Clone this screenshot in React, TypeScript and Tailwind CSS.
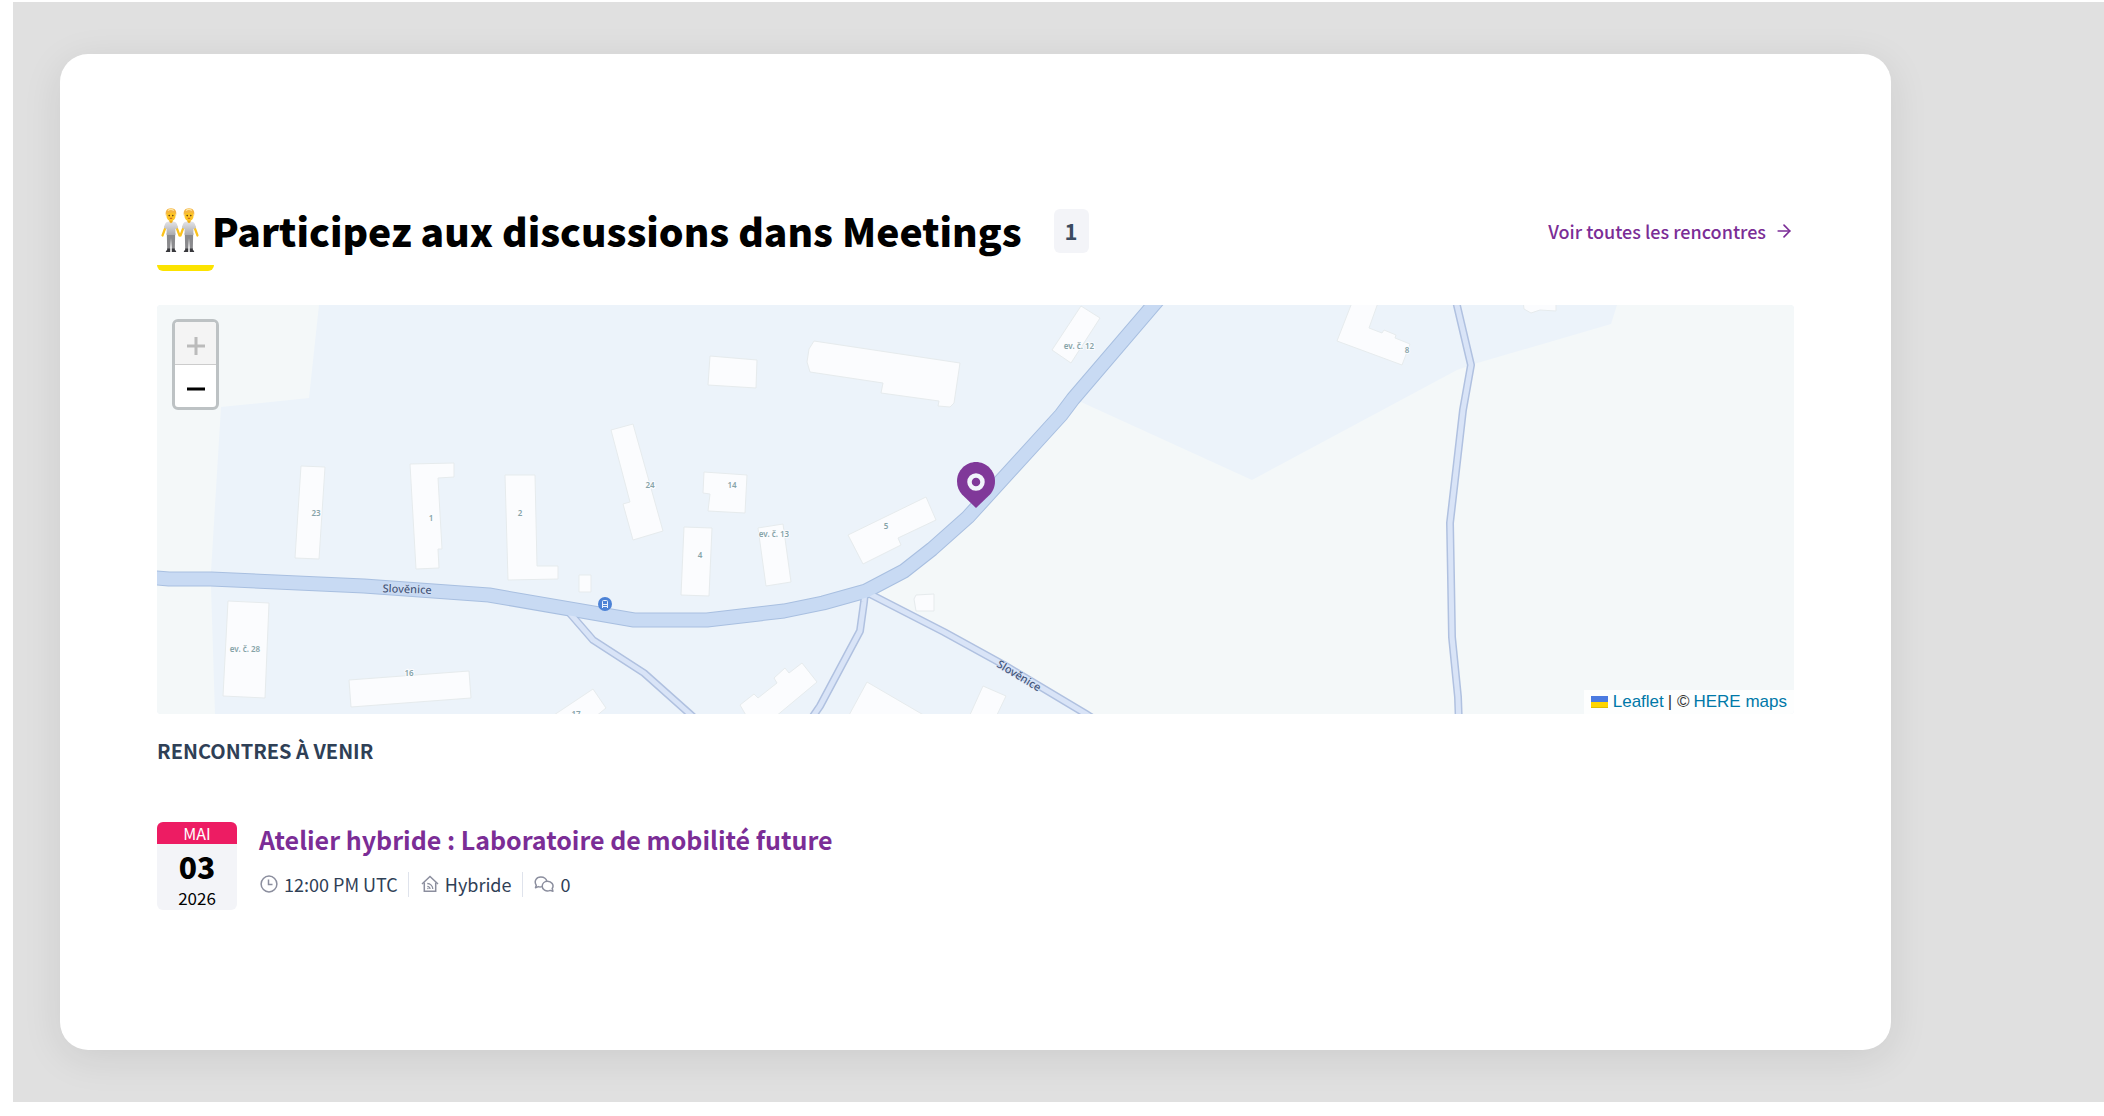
import * as React from 'react';
import { ArrowRight } from 'lucide-react';

interface MapLabel {
  text: string;
  x: number;
  y: number;
}

interface Meeting {
  id: number;
  month: string;
  day: string;
  year: string;
  title: string;
  time: string;
  type: string;
  comments: number;
}

const meetings: Meeting[] = [
  {
    id: 1,
    month: 'MAI',
    day: '03',
    year: '2026',
    title: 'Atelier hybride : Laboratoire de mobilité future',
    time: '12:00 PM UTC',
    type: 'Hybride',
    comments: 0,
  },
];

const fields = [
  '0,0 162,0 152,93 64,102 54,267 54,282 58,409 0,409',
  '924,97 1095,175 1300,65 1317,59 1454,19 1460,0 1637,0 1637,409 929,409 847,360 787,327 709,286 747,266 775,244 811,212 904,110',
];

const buildings = [
  '144,161 168,162 162,254 138,253',
  '253,159 297,158 297,172 281,173 285,244 281,244 282,263 259,264',
  '348,170 378,170 380,261 401,261 401,274 351,275',
  '454,125 476,119 506,226 476,235 466,199 473,197',
  '527,222 555,223 552,291 524,290',
  '422,270 434,270 434,287 422,287',
  '71,296 112,298 108,393 66,391',
  '192,375 312,366 314,393 194,402',
  '436,384 449,403 438,412 394,412',
  '553,51 600,55 599,83 551,80',
  '657,36 803,58 797,98 793,102 781,101 782,96 724,88 726,78 653,67 650,57 652,44',
  '924,1 943,13 914,58 895,45',
  '547,167 590,170 588,208 551,206 553,189 546,188',
  '601,223 626,219 634,277 609,281',
  '691,230 769,192 779,215 741,233 744,240 706,259',
  '759,290 777,289 777,306 759,306 757,294',
  '645,358 660,377 618,412 590,412 583,400 597,389 601,393 620,378 617,373 628,363 632,368',
  '710,377 770,412 691,412',
  '826,381 849,391 839,412 812,412',
  '1196,-5 1222,-5 1212,23 1225,28 1227,25 1239,30 1238,33 1253,39 1245,60 1180,36',
  '1366,-5 1367,4 1374,8 1383,5 1399,6 1399,-5',
];

const sideRoads = [
  '410,305 436,335 487,368 533,409 545,420',
  '708,286 707,297 703,326 663,401 650,420',
  '709,287 787,327 847,360 929,409 945,419',
  '1298,-8 1314,60 1306,105 1293,218 1294,272 1295,332 1301,392 1302,420',
];

const mainRoad =
  '-10,272 12,274 54,274 207,281 332,290 477,315 550,315 627,306 666,298 709,286 747,266 775,244 811,212 904,110 916,94 1005,-10';

const labels: MapLabel[] = [
  { text: '23', x: 159, y: 208 },
  { text: '1', x: 274, y: 213 },
  { text: '2', x: 363, y: 208 },
  { text: '24', x: 493, y: 180 },
  { text: '4', x: 543, y: 250 },
  { text: 'ev. č. 28', x: 88, y: 344 },
  { text: '16', x: 252, y: 368 },
  { text: '17', x: 419, y: 409 },
  { text: '14', x: 575, y: 180 },
  { text: 'ev. č. 13', x: 617, y: 229 },
  { text: '5', x: 729, y: 221 },
  { text: 'ev. č. 12', x: 922, y: 41 },
  { text: '8', x: 1250, y: 45 },
];

const Person: React.FC<{ x: number }> = ({ x }) => (
  <g transform={`translate(${x} 0)`}>
    <path d="M5 18 L1.5 27.5 M15 18 L18.5 27.5" stroke="#fcc21b" strokeWidth="2.2" strokeLinecap="round" />
    <path d="M5.800 25 H14.200 L13.800 42 H10.900 L10 30 L9.100 42 H6.200 Z" fill="#8a8a8d" />
    <path d="M8 13.500 C4.500 14 4 15.500 2.900 20 L5.600 21 V27 H14.400 V21 L17.100 20 C16 15.500 15.500 14 12 13.500 Z" fill="url(#shirt)" />
    <path d="M8.400 11 H11.600 V14 L10 15.200 L8.400 14 Z" fill="#f0ac14" />
    <ellipse cx="10" cy="7.500" rx="4.600" ry="5.500" fill="#fdc424" />
    <path d="M5 8 C3.800 3 6 .3 10 .3 C14 .3 16.200 3 15 8 C14.700 5.500 13.500 4.600 12 4.500 C10 5 7.500 4.700 6.600 4.900 C5.800 5.500 5.300 6.500 5 8 Z" fill="#f4b544" />
    <path d="M7 2.600 C8.500 1.200 11 1.300 12.800 2.400" stroke="#ffe6a3" strokeWidth="1.200" fill="none" />
    <circle cx="8.200" cy="7.600" r=".8" fill="#5a3d12" />
    <circle cx="11.800" cy="7.600" r=".8" fill="#5a3d12" />
    <path d="M8.800 10.300 H11.200" stroke="#c4561c" strokeWidth="1" />
    <path d="M6.200 40.500 H9.200 V44 H4.800 C4.800 43 5.500 42.400 6.200 42 Z M10.800 40.500 H13.800 V42 C14.500 42.400 15.200 43 15.200 44 H10.800 Z" fill="#38383c" />
  </g>
);

const PeopleEmoji: React.FC = () => (
  <svg viewBox="0 0 40 45" className="h-[45px] w-10 shrink-0" role="img" aria-label="Deux personnes" fill="none">
    <defs>
      <linearGradient id="shirt" x1="0" y1="0" x2="0" y2="1">
        <stop offset="0" stopColor="#e4e4e8" />
        <stop offset="1" stopColor="#a9a9ad" />
      </linearGradient>
    </defs>
    <Person x={1} />
    <Person x={19} />
  </svg>
);

const ClockIcon: React.FC = () => (
  <svg viewBox="0 0 18 18" className="size-[18px]" fill="none" stroke="#8b8e9e" strokeWidth="1.5">
    <circle cx="9" cy="9" r="7.9" />
    <path d="M8.500 4.500 V9.500 H12.500" />
  </svg>
);

const HybridIcon: React.FC = () => (
  <svg viewBox="0 0 18 18" className="size-[18px]" fill="none" stroke="#8b8e9e" strokeWidth="1.5">
    <path d="M1 9 L9 1.500 L17 9" />
    <path d="M3.300 7.500 V16.300 H14.700 V7.500" />
    <path d="M6.300 8.500 A5.500 5.500 0 0 1 11.800 14 M6.300 11.300 A2.700 2.700 0 0 1 9 14" strokeWidth="1.300" />
    <circle cx="6.900" cy="13.500" r=".7" fill="#8b8e9e" stroke="none" />
  </svg>
);

const CommentsIcon: React.FC = () => (
  <svg viewBox="0 0 20 18" className="h-[18px] w-5" fill="none" stroke="#8b8e9e" strokeWidth="1.500" strokeLinejoin="round">
    <path d="M8 11.600 C6.500 12.100 5.300 12 4.300 11.600 L1.500 12.800 L2.300 10.300 C-.2 6.500 2 2 6.800 2 C10.200 2 12.500 4 12.700 6.300" />
    <path d="M13.300 6.300 C17.500 6.200 20.500 10 18.200 13.500 L18.900 16.200 L16.200 15.400 C12 17.200 8 14.500 8.200 11 C8.400 8.500 10.500 6.400 13.300 6.300 Z" />
  </svg>
);

const MapCanvas: React.FC = () => (
  <svg viewBox="0 0 1637 409" preserveAspectRatio="xMidYMid slice" className="block h-full w-full" aria-label="Carte">
    <rect width="1637" height="409" fill="#ecf3fa" />
    {fields.map(points => (
      <polygon key={points} points={points} fill="#f4f8f9" />
    ))}
    {buildings.map(points => (
      <polygon key={points} points={points} fill="#fbfcfe" stroke="#e6ebed" strokeWidth="1" />
    ))}
    <g fill="none" strokeLinejoin="round">
      {sideRoads.map(points => (
        <polyline key={points} points={points} stroke="#b0c1e0" strokeWidth="8" />
      ))}
      <polyline points={mainRoad} stroke="#a8bfe0" strokeWidth="15" />
      {sideRoads.map(points => (
        <polyline key={points} points={points} stroke="#d9e4f7" strokeWidth="5" />
      ))}
      <polyline points={mainRoad} stroke="#c8daf3" strokeWidth="13" />
    </g>
    <g fill="#86a3a8" stroke="#fbfcfe" strokeWidth="2" paintOrder="stroke" textAnchor="middle" className="text-[8px] font-semibold">
      {labels.map(({ text, x, y }) => (
        <text key={text} x={x} y={y + 3}>{text}</text>
      ))}
    </g>
    <g fill="#44567a" stroke="#d9e4f7" strokeWidth="1" paintOrder="stroke" textAnchor="middle" className="text-[11px] font-medium">
      <text transform="translate(250 288) rotate(2)">Slověnice</text>
      <text transform="translate(860 374) rotate(31)">Slověnice</text>
    </g>
    <circle cx="448" cy="299" r="7" fill="#4c82d6" />
    <path d="M445.500 303 V296.500 Q445.500 295.500 446.500 295.500 H449.500 Q450.500 295.500 450.500 296.500 V303 M445.500 299.500 H450.500 M445.500 301.500 H450.500" fill="none" stroke="#e8f0fc" strokeWidth="1" />
    <path d="M819 157 C829 157 838 165.500 838 176 C838 182 836 186 833 189.500 L819 203 L805 189.500 C802 186 800 182 800 176 C800 165.500 809 157 819 157 Z" fill="#803899" />
    <circle cx="819" cy="177" r="6.500" fill="none" stroke="#f1f4fb" strokeWidth="4.500" />
  </svg>
);

const MeetingsMap: React.FC = () => (
  <div className="relative mt-[52px] h-[409px] overflow-hidden rounded-[4px] font-['Noto_Sans',sans-serif]">
    <MapCanvas />
    <div className="absolute top-[14px] left-[15px] flex w-[47px] flex-col overflow-hidden rounded-[6px] border-[3px] border-[#bdc2c4] bg-white">
      <button type="button" disabled aria-label="Zoom avant" className="flex h-[43px] items-center justify-center border-b border-[#ccc] bg-[#f4f4f4] pt-[6px] text-[#bbb]">
        <svg viewBox="0 0 18 18" className="size-[18px]" stroke="currentColor" strokeWidth="3">
          <path d="M0 9 H18 M9 0 V18" />
        </svg>
      </button>
      <button type="button" aria-label="Zoom arrière" className="flex h-[42px] items-center justify-center pt-[6px] text-black">
        <svg viewBox="0 0 18 18" className="size-[18px]" stroke="currentColor" strokeWidth="3">
          <path d="M0 9 H18" />
        </svg>
      </button>
    </div>
    <div className="absolute right-0 bottom-0 flex h-6 items-center bg-white/80 px-[7px] font-['Liberation_Sans',Arial,sans-serif] text-[17px] text-[#333]">
      <svg viewBox="0 0 17 12" className="mr-[5px] h-3 w-[17px]">
        <path fill="#4c7be1" d="M0 0h17v6H0z" />
        <path fill="#ffd500" d="M0 6h17v5H0z" />
        <path fill="#e0bc00" d="M0 11h17v1H0z" />
      </svg>
      <a href="#leaflet" className="text-[#0078a8]">Leaflet</a>
      <span className="mx-1">| ©</span>
      <a href="#here" className="text-[#0078a8]">HERE maps</a>
    </div>
  </div>
);

const MeetingRow: React.FC<{ meeting: Meeting }> = ({ meeting }) => (
  <li className="flex gap-[22px]">
    <div className="flex w-20 shrink-0 flex-col overflow-hidden rounded-[6px] bg-[#f3f4f8] text-center text-black">
      <span className="h-[22px] bg-[#ed1c63] text-[16px] leading-[22px] text-white">{meeting.month}</span>
      <span className="h-11 text-[30px] leading-[44px] font-black">{meeting.day}</span>
      <span className="h-[22px] text-[17px] leading-[20px]">{meeting.year}</span>
    </div>
    <div>
      <h4 className="text-[25px] leading-[34px] font-bold text-[#7b2d96]">
        <a href="#atelier">{meeting.title}</a>
      </h4>
      <div className="mt-4 flex h-[25px] items-center text-[18px] leading-6 text-[#2f4056]">
        <span className="flex items-center gap-[6px] pr-[10px] pb-[2px] pl-[1px]">
          <ClockIcon />
          {meeting.time}
        </span>
        <span className="flex h-full items-center gap-[6px] border-x border-[#dfe3ec] px-3 pr-[11px] pb-[2px]">
          <HybridIcon />
          {meeting.type}
        </span>
        <span className="flex items-center gap-[6px] pb-[2px] pl-[11px]">
          <CommentsIcon />
          {meeting.comments}
        </span>
      </div>
    </div>
  </li>
);

const App: React.FC = () => {
  return (
    <div className="min-h-screen bg-white pt-[2px] pl-[13px] font-['Noto_Sans_CJK_SC','Noto_Sans',sans-serif]">
      <div className="bg-[#e0e0e0] pt-[52px] pr-[213px] pb-[52px] pl-[47px]">
        <main className="rounded-[28px] bg-white px-[97px] pt-[155px] pb-[140px] shadow-[0_8px_40px_rgba(0,0,0,0.09)]">
          <header className="flex h-11 items-center justify-between">
            <div className="flex items-center gap-8">
              <h2 className="relative flex items-center gap-3 pb-[2px] pl-[3px] text-[39px] leading-[42px] font-black text-black">
                <PeopleEmoji />
                Participez aux discussions dans Meetings
                <span className="absolute top-[57px] left-0 h-[6px] w-[57px] rounded-b-[6px] bg-[#fce300]" />
              </h2>
              <span className="flex h-11 w-[35px] items-center justify-center rounded-[6px] bg-[#f3f4f8] pb-[2px] text-[22px] font-bold text-[#3a4a60]">1</span>
            </div>
            <a href="#meetings" className="flex items-center gap-2 text-[18px] font-medium text-[#7b2d96]">
              Voir toutes les rencontres
              <ArrowRight className="size-5" strokeWidth={2} />
            </a>
          </header>
          <MeetingsMap />
          <h3 className="mt-[22px] text-[20px] leading-[30px] font-bold text-[#2f4056] uppercase">Rencontres à venir</h3>
          <ul className="mt-14">
            {meetings.map(meeting => (
              <MeetingRow key={meeting.id} meeting={meeting} />
            ))}
          </ul>
        </main>
      </div>
    </div>
  );
};

export default App;
